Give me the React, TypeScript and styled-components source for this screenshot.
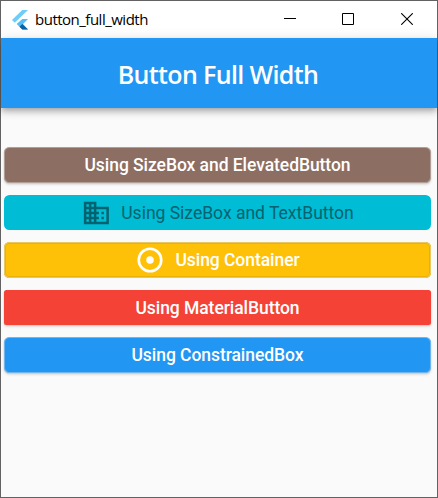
import React from "react";
import styled, { createGlobalStyle } from "styled-components";

const GlobalStyle = createGlobalStyle`
  * { box-sizing: border-box; }
  html, body { margin: 0; padding: 0; }
  body { overflow: hidden; }
`;

const Window = styled.div`
  width: 438px;
  height: 498px;
  display: flex;
  flex-direction: column;
  background: #fafafa;
  border: 1px solid #626262;
`;

const TitleBar = styled.header`
  height: 37px;
  flex: none;
  display: flex;
  align-items: center;
  justify-content: space-between;
  background: #fff;
  padding: 0 0 0 10px;
`;

const WindowName = styled.div`
  display: flex;
  align-items: center;
  gap: 5px;
  color: #000;
  font: 400 15px/20px "Open Sans", sans-serif;
  letter-spacing: -0.5px;

  svg { display: block; }
`;

const WindowLabel = styled.span`
  padding-bottom: 2px;
`;

const WindowControls = styled.div`
  display: flex;
  height: 100%;
`;

const ControlButton = styled.button<{ $width?: number }>`
  width: ${(p) => p.$width ?? 58}px;
  height: 100%;
  padding: 0 2px 1px 0;
  border: 0;
  background: none;
  display: flex;
  align-items: center;
  justify-content: center;

  svg { display: block; }
`;

const AppBar = styled.div`
  height: 70px;
  flex: none;
  display: flex;
  align-items: center;
  justify-content: center;
  background: #2196f3;
  box-shadow: 0 2px 5px -1px rgba(0, 0, 0, 0.2), 0 5px 6px rgba(0, 0, 0, 0.14),
    0 1px 12px rgba(0, 0, 0, 0.12);
`;

const Heading = styled.h1`
  margin: 0;
  padding: 2px 2px 0 0;
  color: #fff;
  font: 650 25px/34px "Open Sans", sans-serif;
  letter-spacing: -0.64px;
`;

const ButtonList = styled.main`
  display: flex;
  flex-direction: column;
  gap: 12px;
  padding: 39px 6px 0 3px;
`;

type Kind = "raised" | "soft" | "flat" | "outlined";

const elevation =
  "0 1px 2px rgba(0,0,0,.14), 0 2px 3px rgba(0,0,0,.08)";

const shadows: Record<Kind, string> = {
  raised: elevation,
  soft: `inset 0 0 0 1px rgba(225,225,225,.42), ${elevation}`,
  flat: "none",
  outlined: "inset 0 0 0 1px #e7c865, inset 0 0 0 2px #eab208",
};

const WideButton = styled.button<{
  $color: string;
  $ink?: string;
  $kind: Kind;
  $radius?: number;
  $height?: number;
  $weight?: number;
}>`
  width: 100%;
  height: ${(p) => p.$height ?? 36}px;
  padding: 0;
  border: 0;
  border-radius: ${(p) => p.$radius ?? 5.5}px;
  display: flex;
  align-items: center;
  justify-content: center;
  gap: 10px;
  background: ${(p) => p.$color};
  color: ${(p) => p.$ink ?? "#fff"};
  box-shadow: ${(p) => shadows[p.$kind]};
  font: ${(p) => p.$weight ?? 500} 17.5px/20px Roboto, sans-serif;
  letter-spacing: ${(p) => (p.$weight === 400 ? 0 : -0.06)}px;
  white-space: nowrap;

  svg { display: block; flex: none; }
`;

const FlutterLogo = () => (
  <svg width="19" height="20" viewBox="0 0 19 20">
    <path d="M11.3 0H17L3.8 12.8 1 10z" fill="#6fcdf8" />
    <path d="M11.3 9H17l-5 5 5 5.5h-5.7L5.7 14z" fill="#54bdf3" />
    <path d="M8.5 16.8l2.8-2.8 5.7 5.5h-5.7z" fill="#0862a5" />
  </svg>
);

const BusinessIcon = () => (
  <svg width="30" height="30" viewBox="-0.3 0 24 24" fill="currentColor">
    <path d="M12 7V3H2v18h20V7H12zM6 19H4v-2h2v2zm0-4H4v-2h2v2zm0-4H4V9h2v2zm0-4H4V5h2v2zm4 12H8v-2h2v2zm0-4H8v-2h2v2zm0-4H8V9h2v2zm0-4H8V5h2v2zm10 12h-8v-2h2v-2h-2v-2h2v-2h-2V9h8v10zm-2-8h-2v2h2v-2zm0 4h-2v2h2v-2z" />
  </svg>
);

const AdjustIcon = () => (
  <svg width="30" height="30" viewBox="0 0 24 24" fill="none">
    <circle cx="12" cy="12" r="9" stroke="currentColor" strokeWidth="2.1" />
    <circle cx="12" cy="12" r="3" fill="currentColor" />
  </svg>
);

export default function App() {
  return (
    <>
      <GlobalStyle />
      <Window>
        <TitleBar>
          <WindowName>
            <FlutterLogo />
            <WindowLabel>button_full_width</WindowLabel>
          </WindowName>
          <WindowControls>
            <ControlButton aria-label="Minimize">
              <svg width="12" height="12" viewBox="0 0 12 12">
                <path d="M0 5.5h12" stroke="#000" />
              </svg>
            </ControlButton>
            <ControlButton aria-label="Maximize">
              <svg width="12" height="12" viewBox="0 0 12 12">
                <path d="M.5.5h11v11H.5z" stroke="#000" fill="none" />
              </svg>
            </ControlButton>
            <ControlButton aria-label="Close" $width={59}>
              <svg width="12" height="12" viewBox="0 0 12 12">
                <path d="M.2.2l11.6 11.6M11.8.2L.2 11.8" stroke="#000" strokeWidth="1.1" />
              </svg>
            </ControlButton>
          </WindowControls>
        </TitleBar>
        <AppBar>
          <Heading>Button Full Width</Heading>
        </AppBar>
        <ButtonList>
          <WideButton $color="#8d6e63" $kind="soft">
            Using SizeBox and ElevatedButton
          </WideButton>
          <WideButton $color="#00bcd4" $ink="#01636f" $kind="flat" $height={35} $weight={400}>
            <BusinessIcon />
            Using SizeBox and TextButton
          </WideButton>
          <WideButton $color="#ffc107" $kind="outlined">
            <AdjustIcon />
            Using Container
          </WideButton>
          <WideButton $color="#f44336" $kind="raised" $height={35} $radius={2.5}>
            Using MaterialButton
          </WideButton>
          <WideButton $color="#2196f3" $kind="soft">
            Using ConstrainedBox
          </WideButton>
        </ButtonList>
      </Window>
    </>
  );
}
